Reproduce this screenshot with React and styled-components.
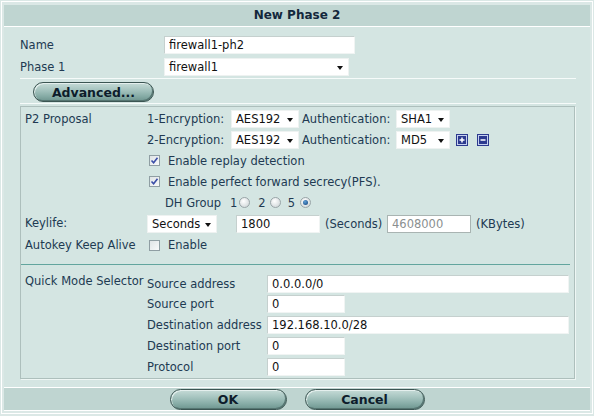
import React from 'react';
import styled, { createGlobalStyle } from 'styled-components';

const Global = createGlobalStyle`
  html, body { margin: 0; padding: 0; background: #dbe8e6; }
  body {
    font-family: "DejaVu Sans", Verdana, sans-serif;
    font-size: 11.5px;
    color: #213a52;
  }
  * { box-sizing: border-box; }
`;

const Frame = styled.div`
  margin: 1px 1px 0 1px;
  border: 1px solid #ffffff;
  padding: 3px 2px 2px 2px;
`;

const Header = styled.div`
  height: 22px;
  line-height: 21px;
  background: #bfd5d1;
  border-bottom: 1px solid #ffffff;
  text-align: center;
  font-weight: bold;
  font-size: 12px;
  color: #13283c;
`;

const Body = styled.div`
  background: #d4e5e2;
  padding: 9px 15px 8px 16px;
`;

const FieldRow = styled.div`
  display: flex;
  align-items: center;
  height: 18px;
  margin-bottom: ${p => p.$mb || 0}px;
`;

const TopLabel = styled.div`
  width: 144px;
  flex: none;
`;

const Rule = styled.div`
  height: 1px;
  background: #f6fbfa;
  margin-top: ${p => p.$mt || 0}px;
  margin-right: -1px;
`;

const ButtonRow = styled.div`
  display: flex;
  align-items: center;
  justify-content: ${p => (p.$center ? 'center' : 'flex-start')};
  gap: 18px;
  padding-left: ${p => p.$pl || 0}px;
  margin-top: ${p => p.$mt || 0}px;
`;

const PillButton = styled.button`
  width: ${p => p.$w}px;
  height: ${p => p.$h || 21}px;
  border-radius: 11px;
  border: 1px solid #3b5552;
  background: linear-gradient(to bottom, #c6dbd7 0%, #a4c3be 40%, #84aaa4 75%, #6e958f 100%);
  box-shadow: inset 1px 1px 0 #e4efed, inset -1px -1px 0 #557571;
  font-family: "DejaVu Sans", Verdana, sans-serif;
  font-weight: bold;
  font-size: 12.5px;
  color: #0d1c2b;
  padding: 0;
  cursor: pointer;
`;

const Panel = styled.div`
  margin-top: 2px;
  border: 1px solid #adbfbc;
  box-shadow: 1px 1px 0 #eef6f4;
  padding: 1px 0 1px 4px;
`;

const Section = styled.div`
  display: flex;
`;

const SectionLabel = styled.div`
  width: 122px;
  flex: none;
  line-height: ${p => p.$lh || 13}px;
  padding-top: ${p => p.$pt || 0}px;
  white-space: nowrap;
`;

const SectionBody = styled.div`
  display: flex;
  flex-direction: column;
  flex: 1;
  padding-top: ${p => p.$pt || 0}px;
`;

const Line = styled.div`
  display: flex;
  align-items: center;
  height: ${p => p.$h}px;
  padding-left: ${p => p.$pl || 0}px;
  white-space: nowrap;
`;

const Text = styled.span`
  display: inline-block;
  width: ${p => (p.$w ? `${p.$w}px` : 'auto')};
  margin-left: ${p => p.$ml || 0}px;
  margin-right: ${p => p.$mr || 0}px;
  flex: none;
`;

const Select = styled.div`
  width: ${p => p.$w}px;
  height: 18px;
  background: #ffffff;
  border: 1px solid #eef2f1;
  display: flex;
  align-items: center;
  justify-content: space-between;
  padding: 0 5px 0 4px;
  font-size: 11.5px;
  color: #111;
  flex: none;
  margin-right: ${p => p.$mr || 0}px;
`;

const Arrow = styled.span`
  width: 0;
  height: 0;
  border-left: 3.5px solid transparent;
  border-right: 3.5px solid transparent;
  border-top: 4px solid #111;
  margin-top: 2px;
`;

const Input = styled.input`
  width: ${p => p.$w}px;
  height: 18px;
  background: #ffffff;
  border: 1px solid;
  border-color: ${p => (p.disabled ? '#a9b4b2' : '#c5d0ce #f0f4f3 #f0f4f3 #c5d0ce')};
  padding: 0 4px;
  font-family: "DejaVu Sans", Verdana, sans-serif;
  font-size: 11.5px;
  color: ${p => (p.disabled ? '#8a8f90' : '#111')};
  outline: none;
  flex: none;
  margin-left: ${p => p.$ml || 0}px;
  margin-right: ${p => p.$mr || 0}px;
`;

const Check = styled.span`
  width: 11px;
  height: 11px;
  flex: none;
  margin-left: 2px;
  margin-right: 8px;
  border: 1px solid #8f9ea3;
  background: linear-gradient(135deg, #dfe4e6, #f8f9fa);
  display: inline-flex;
  align-items: center;
  justify-content: center;
`;

const Radio = styled.span`
  width: 11px;
  height: 11px;
  flex: none;
  border-radius: 50%;
  border: 1px solid #9aa5a8;
  background: radial-gradient(circle at 40% 35%, #ffffff, #c8d0d2);
  margin-right: ${p => p.$mr || 0}px;
  display: inline-flex;
  align-items: center;
  justify-content: center;
`;

const Dot = styled.span`
  width: 5px;
  height: 5px;
  border-radius: 50%;
  background: radial-gradient(circle at 40% 35%, #5fa0d8, #0f3f78);
`;

const TealRule = styled.div`
  height: 1px;
  background: #62a59e;
  margin: 8px 4px 0 -4px;
`;

const IconBtn = styled.span`
  display: inline-flex;
  margin-left: ${p => p.$ml || 0}px;
  flex: none;
`;

const Footer = styled.div`
  border-top: 1px solid #ffffff;
  border-bottom: 1px solid #ffffff;
  background: #bfd5d1;
  height: 24px;
  padding-top: 1px;
`;

const CheckMark = () => (
  <svg width="9" height="9" viewBox="0 0 9 9">
    <path d="M1.5 4.5 L3.6 6.8 L7.5 1.8" fill="none" stroke="#3a4ea8" strokeWidth="1.6" />
  </svg>
);

const SquareIcon = ({ plus }) => (
  <svg width="12" height="12" viewBox="0 0 12 12">
    <rect x="0" y="0" width="12" height="12" fill="#2c3a8f" />
    <rect x="1.5" y="1.5" width="9" height="9" fill="#2c3a8f" stroke="#c6d0ef" strokeWidth="1" />
    <path d="M3.5 6 H8.5" stroke="#ffffff" strokeWidth="1.5" />
    {plus && <path d="M6 3.5 V8.5" stroke="#ffffff" strokeWidth="1.5" />}
  </svg>
);

const FakeSelect = ({ w, value, mr }) => (
  <Select $w={w} $mr={mr}>
    <span>{value}</span>
    <Arrow />
  </Select>
);

const CheckBox = ({ checked }) => <Check>{checked && <CheckMark />}</Check>;

export default function App() {
  return (
    <>
      <Global />
      <Frame>
        <Header>New Phase 2</Header>
        <Body>
          <FieldRow $mb={4}>
            <TopLabel>Name</TopLabel>
            <Input $w={191} defaultValue="firewall1-ph2" />
          </FieldRow>
          <FieldRow>
            <TopLabel>Phase 1</TopLabel>
            <FakeSelect w={185} value="firewall1" />
          </FieldRow>
          <Rule $mt={2} />
          <ButtonRow $pl={13} $mt={3}>
            <PillButton $w={121} $h={20}>Advanced...</PillButton>
          </ButtonRow>
          <Rule $mt={1} />
          <Panel>
            <Section>
              <SectionLabel $lh={22}>P2 Proposal</SectionLabel>
              <SectionBody>
                <Line $h={22}>
                  <Text $w={84}>1-Encryption:</Text>
                  <FakeSelect w={68} value="AES192" mr={3} />
                  <Text $w={94}>Authentication:</Text>
                  <FakeSelect w={54} value="SHA1" />
                </Line>
                <Line $h={20}>
                  <Text $w={84}>2-Encryption:</Text>
                  <FakeSelect w={68} value="AES192" mr={3} />
                  <Text $w={94}>Authentication:</Text>
                  <FakeSelect w={54} value="MD5" />
                  <IconBtn $ml={6}><SquareIcon plus /></IconBtn>
                  <IconBtn $ml={9}><SquareIcon /></IconBtn>
                </Line>
                <Line $h={21}>
                  <CheckBox checked />
                  <Text>Enable replay detection</Text>
                </Line>
                <Line $h={21}>
                  <CheckBox checked />
                  <Text>Enable perfect forward secrecy(PFS).</Text>
                </Line>
                <Line $h={21} $pl={18}>
                  <Text $w={65}>DH Group</Text>
                  <Text $mr={2}>1</Text>
                  <Radio $mr={8} />
                  <Text $mr={4}>2</Text>
                  <Radio $mr={7} />
                  <Text $mr={5}>5</Text>
                  <Radio><Dot /></Radio>
                </Line>
              </SectionBody>
            </Section>
            <Section>
              <SectionLabel $lh={21}>Keylife:</SectionLabel>
              <SectionBody>
                <Line $h={21}>
                  <FakeSelect w={70} value="Seconds" />
                  <Input $w={84} $ml={19} defaultValue="1800" />
                  <Text $w={62} $ml={5}>(Seconds)</Text>
                  <Input $w={84} disabled defaultValue="4608000" />
                  <Text $ml={5}>(KBytes)</Text>
                </Line>
              </SectionBody>
            </Section>
            <Section>
              <SectionLabel $lh={22}>Autokey Keep Alive</SectionLabel>
              <SectionBody>
                <Line $h={22}>
                  <CheckBox />
                  <Text>Enable</Text>
                </Line>
              </SectionBody>
            </Section>
            <TealRule />
            <Section>
              <SectionLabel $pt={10}>Quick Mode Selector</SectionLabel>
              <SectionBody $pt={9}>
                <Line $h={20}>
                  <Text $w={120}>Source address</Text>
                  <Input $w={302} defaultValue="0.0.0.0/0" />
                </Line>
                <Line $h={20}>
                  <Text $w={120}>Source port</Text>
                  <Input $w={78} defaultValue="0" />
                </Line>
                <Line $h={21}>
                  <Text $w={120}>Destination address</Text>
                  <Input $w={302} defaultValue="192.168.10.0/28" />
                </Line>
                <Line $h={21}>
                  <Text $w={120}>Destination port</Text>
                  <Input $w={78} defaultValue="0" />
                </Line>
                <Line $h={21}>
                  <Text $w={120}>Protocol</Text>
                  <Input $w={78} defaultValue="0" />
                </Line>
              </SectionBody>
            </Section>
          </Panel>
        </Body>
        <Footer>
          <ButtonRow $center>
            <PillButton $w={117}>OK</PillButton>
            <PillButton $w={120}>Cancel</PillButton>
          </ButtonRow>
        </Footer>
      </Frame>
    </>
  );
}
